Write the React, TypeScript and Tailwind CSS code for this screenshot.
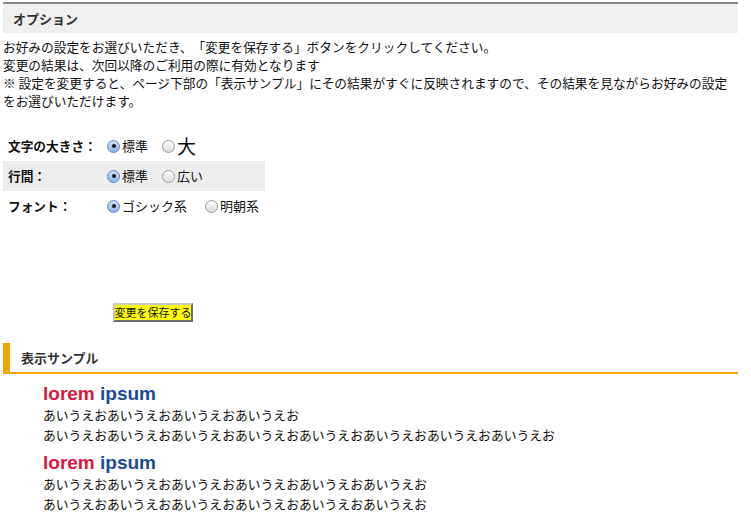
import React from "react";

const jp = { fontFamily: '"Noto Sans CJK JP", "Noto Sans", sans-serif' };

function Radio({ checked }: { checked?: boolean }) {
  return (
    <span
      className={
        "inline-flex items-center justify-center w-[13px] h-[13px] rounded-full border shrink-0 " +
        (checked
          ? "border-[#5b86c4] bg-gradient-to-b from-[#cfe0f5] to-[#8fb3e3]"
          : "border-[#9a9a9a] bg-gradient-to-b from-[#ffffff] to-[#dcdcdc]")
      }
    >
      {checked && <span className="w-[4px] h-[4px] rounded-full bg-[#1a1a1a]" />}
    </span>
  );
}

function Row({
  label,
  gray,
  children,
}: {
  label: string;
  gray?: boolean;
  children: React.ReactNode;
}) {
  return (
    <div className={"flex items-center h-[30px] w-[262px] " + (gray ? "bg-[#ededed]" : "")}>
      <div className="w-[104px] pl-[5px] font-bold text-[12.7px] text-[#111] whitespace-nowrap">{label}</div>
      <div className="flex items-center">{children}</div>
    </div>
  );
}

function Opt({ checked, label, big, mr }: { checked?: boolean; label: string; big?: boolean; mr?: string }) {
  return (
    <span className={"flex items-center " + (mr ?? "")}>
      <Radio checked={checked} />
      <span className={"ml-[2px] whitespace-nowrap text-[#111] " + (big ? "text-[19px] leading-[20px]" : "text-[13px]")}>
        {label}
      </span>
    </span>
  );
}

function Sample() {
  return (
    <div className="pl-[40px]">
      <div className="text-[19px] leading-[22px] font-bold" style={{ fontFamily: '"Liberation Sans", Arial, sans-serif' }}>
        <span className="text-[#d8173f]">lorem</span> <span className="text-[#1b4b97]">ipsum</span>
      </div>
    </div>
  );
}

export default function App() {
  return (
    <div
      className="w-[751px] h-[528px] bg-white px-[3px] pt-[2px] text-[12.7px] text-[#111] [text-spacing-trim:space-all]"
      style={jp}
    >
      <div className="w-[735px] h-[31px] border-t-2 border-[#8a8a8a] bg-[#efefef] flex items-center pl-[10px]">
        <span className="font-bold text-[13px] text-[#333]">オプション</span>
      </div>
      <div className="mt-[5px] leading-[18px] whitespace-nowrap text-[12.7px]">
        お好みの設定をお選びいただき、「変更を保存する」ボタンをクリックしてください。
        <br />
        変更の結果は、次回以降のご利用の際に有効となります
        <br />
        ※ 設定を変更すると、ページ下部の「表示サンプル」にその結果がすぐに反映されますので、その結果を見ながらお好みの設定
        <br />
        をお選びいただけます。
      </div>
      <div className="mt-[21px]">
        <Row label="文字の大きさ：">
          <Opt checked label="標準" mr="mr-[14px]" />
          <Opt label="大" big />
        </Row>
        <Row label="行間：" gray>
          <Opt checked label="標準" mr="mr-[14px]" />
          <Opt label="広い" />
        </Row>
        <Row label="フォント：">
          <Opt checked label="ゴシック系" mr="mr-[18px]" />
          <Opt label="明朝系" />
        </Row>
      </div>
      <div className="mt-[82px] pl-[110px]">
        <button
          className="w-[80px] h-[19px] bg-[#ffff00] text-[11px] leading-[13px] text-[#111] border-2 border-t-[#c8c8c8] border-l-[#c8c8c8] border-r-[#6e6e6e] border-b-[#6e6e6e] flex items-center justify-center whitespace-nowrap"
          style={jp}
        >
          変更を保存する
        </button>
      </div>
      <div className="mt-[21px] w-[735px] h-[31px] border-l-[7px] border-b-2 border-[#f5a500] flex items-center pl-[11px]">
        <span className="font-bold text-[13px] text-[#333]">表示サンプル</span>
      </div>
      <div className="mt-[9px]">
        <Sample />
        <div className="pl-[40px] leading-[20px] text-[12.8px] whitespace-nowrap">
          <div>あいうえおあいうえおあいうえおあいうえお</div>
          <div>あいうえおあいうえおあいうえおあいうえおあいうえおあいうえおあいうえおあいうえお</div>
        </div>
        <div className="mt-[7px]">
          <Sample />
        </div>
        <div className="pl-[40px] leading-[20px] text-[12.8px] whitespace-nowrap">
          <div>あいうえおあいうえおあいうえおあいうえおあいうえおあいうえお</div>
          <div>あいうえおあいうえおあいうえおあいうえおあいうえおあいうえお</div>
        </div>
      </div>
    </div>
  );
}
